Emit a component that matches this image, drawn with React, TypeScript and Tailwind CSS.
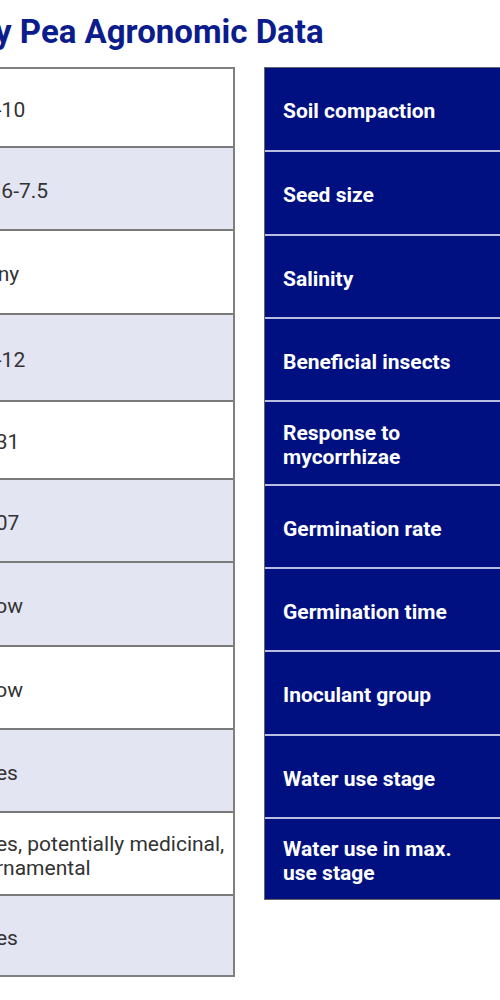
import React from 'react';

type Row = { label: string; value: string; h: string; shade?: boolean };

const leftRows: Row[] = [
    { label: 'Seeding rate (lb/ac)', value: '8-10', h: 'h-[77px]' },
    { label: 'Soil pH', value: '5.6-7.5', h: 'h-[83px]', shade: true },
    { label: 'Soil texture', value: 'Any', h: 'h-[84px]' },
    { label: 'Seeding depth (mm)', value: '8-12', h: 'h-[87px]', shade: true },
    { label: 'Days to flowering', value: '131', h: 'h-[78px]' },
    { label: 'Days to maturity', value: '107', h: 'h-[83px]', shade: true },
    { label: 'Drought tolerance', value: 'Low', h: 'h-[84px]', shade: true },
    { label: 'Flood tolerance', value: 'Low', h: 'h-[83px]' },
    { label: 'Nitrogen fixing', value: 'Yes', h: 'h-[83px]', shade: true },
    { label: 'Other uses', value: 'Yes, potentially medicinal, ornamental', h: 'h-[83px]' },
    { label: 'Pollinator friendly', value: 'Yes', h: 'h-[81px]', shade: true },
];

const rightRows: Row[] = [
    { label: 'Soil compaction', value: 'Moderate', h: 'h-[82px]' },
    { label: 'Seed size', value: 'Medium', h: 'h-[84px]' },
    { label: 'Salinity', value: 'Low', h: 'h-[83px]' },
    { label: 'Beneficial insects', value: 'Yes', h: 'h-[83px]' },
    { label: 'Response to mycorrhizae', value: 'High', h: 'h-[84px]' },
    { label: 'Germination rate', value: '85%', h: 'h-[83px]' },
    { label: 'Germination time', value: '7-10 days', h: 'h-[83px]' },
    { label: 'Inoculant group', value: 'Cowpea', h: 'h-[84px]' },
    { label: 'Water use stage', value: 'Flowering', h: 'h-[83px]' },
    { label: 'Water use in max. use stage', value: 'Moderate', h: 'h-[82px]' },
];

const LeftTable = () => (
    <div className="w-[495px] shrink-0 border-2 border-[#808080] self-start">
        {leftRows.map((r, i) => (
            <div
                key={r.label}
                className={`grid grid-cols-[229px_1fr] ${r.h} ${i > 0 ? 'border-t-2 border-[#7a7a7a]' : ''}`}
            >
                <div className="flex items-center bg-[#001080] px-5 text-[21px] font-bold leading-6 text-white">
                    {r.label}
                </div>
                <div
                    className={`flex items-center pt-1 pl-[13px] pr-1 text-[21px] leading-6 text-[#333] ${r.shade ? 'bg-[#e3e5f2]' : 'bg-white'}`}
                >
                    {r.value}
                </div>
            </div>
        ))}
    </div>
);

const RightTable = () => (
    <div className="w-[496px] shrink-0 border border-[#666] bg-[#001080] self-start">
        {rightRows.map((r, i) => (
            <div
                key={r.label}
                className={`grid grid-cols-[248px_1fr] ${r.h} ${i > 0 ? 'border-t-2 border-[#b9bde3]' : ''}`}
            >
                <div className="flex items-center pt-1 pl-[18px] pr-[30px] text-[21px] font-bold leading-6 text-white">
                    {r.label}
                </div>
                <div className="flex items-center bg-white px-5 text-[21px] leading-6 text-[#333]">
                    {r.value}
                </div>
            </div>
        ))}
    </div>
);

export default function App() {
    return (
        <div className="min-h-screen w-full overflow-hidden bg-white font-[Roboto,'Liberation_Sans',sans-serif]">
            <div className="flex justify-center">
                <div className="w-[1020px] shrink-0 pt-3">
                    <h1 className="ml-[143px] mb-[15px] text-[33px] font-bold leading-10 text-[#0b1c8c]">
                        Butterfly Pea Agronomic Data
                    </h1>
                    <div className="flex gap-[29px]">
                        <LeftTable />
                        <RightTable />
                    </div>
                </div>
            </div>
        </div>
    );
}
